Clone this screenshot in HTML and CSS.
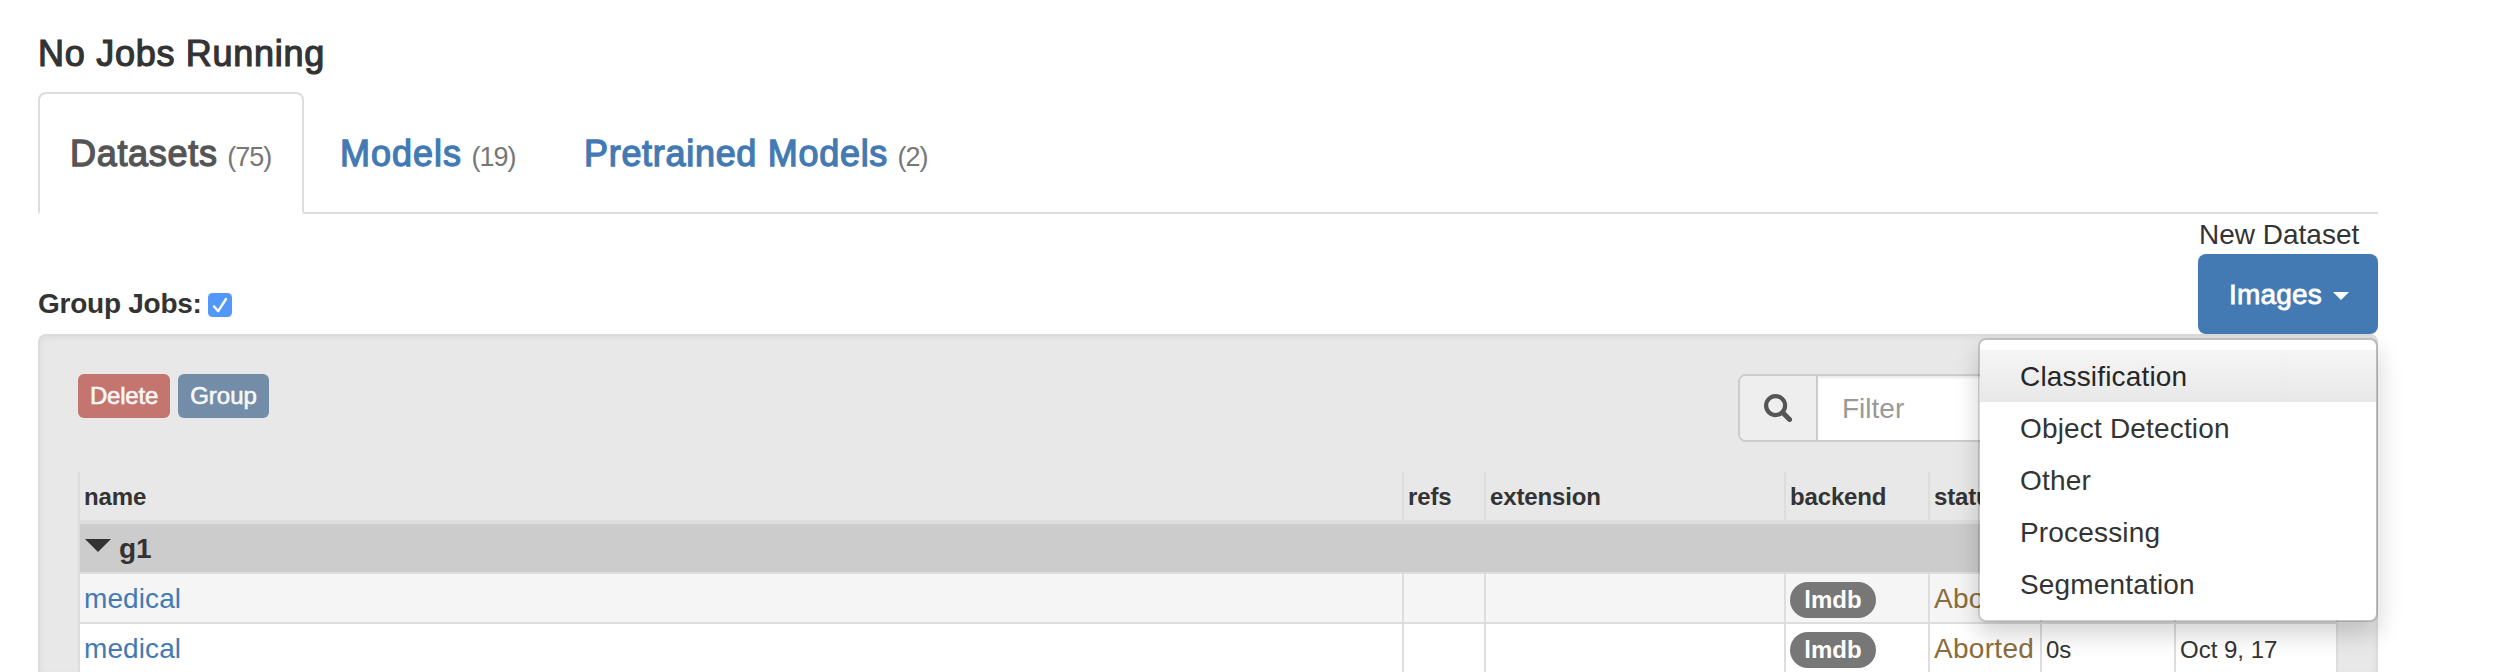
FILE: index.html
```html
<!DOCTYPE html>
<html lang="en">
<head>
<meta charset="utf-8">
<title>Datasets</title>
<link rel="stylesheet" href="styles.css">
</head>
<body>
<main class="page">
  <h4 class="running">No Jobs Running</h4>
  <nav class="tabs">
    <a class="tab tab-datasets active"><span>Datasets</span><small>(75)</small></a>
    <a class="tab tab-models"><span>Models</span><small>(19)</small></a>
    <a class="tab tab-pretrained"><span>Pretrained Models</span><small>(2)</small></a>
  </nav>
  <section class="toolbar">
    <label class="group-jobs">Group Jobs:
      <svg class="check" viewBox="0 0 24 24"><rect width="24" height="24" rx="4.5" fill="#5198f8"/><path d="M6 13.4l4.2 4.8L18 6" fill="none" stroke="#fff" stroke-width="2.4" stroke-linecap="round" stroke-linejoin="round"/></svg>
    </label>
    <div class="new-dataset">
      <div class="new-label">New Dataset</div>
      <button class="images-btn">Images<span class="caret"></span></button>
      <ul class="menu">
        <li class="hover">Classification</li>
        <li>Object Detection</li>
        <li>Other</li>
        <li>Processing</li>
        <li>Segmentation</li>
      </ul>
    </div>
  </section>
  <section class="well">
    <div class="actions">
      <button class="btn danger">Delete</button>
      <button class="btn primary">Group</button>
      <div class="search">
        <span class="addon"><svg class="search-icon" viewBox="0 0 28 28"><circle cx="11.6" cy="11.6" r="9.5" fill="none" stroke="#555" stroke-width="4.2"/><path d="M18.6 18.6l7 7" stroke="#555" stroke-width="5" stroke-linecap="round"/></svg></span>
        <span class="filter">Filter</span>
      </div>
    </div>
    <table class="jobs">
      <colgroup><col class="c-name"><col class="c-refs"><col class="c-ext"><col class="c-backend"><col class="c-status"><col class="c-elapsed"><col class="c-date"></colgroup>
      <thead><tr><th>name</th><th>refs</th><th>extension</th><th>backend</th><th>status</th><th></th><th></th></tr></thead>
      <tbody>
        <tr class="group"><td colspan="7"><span class="toggle"></span>g1</td></tr>
        <tr class="odd"><td><a>medical</a></td><td></td><td></td><td><span class="badge">lmdb</span></td><td class="aborted">Aborted</td><td></td><td></td></tr>
        <tr class="last"><td><a>medical</a></td><td></td><td></td><td><span class="badge">lmdb</span></td><td class="aborted">Aborted</td><td><span class="sm">0s</span></td><td><span class="sm">Oct 9, 17</span></td></tr>
      </tbody>
    </table>
  </section>
</main>
</body>
</html>
```
FILE: styles.css
```css
* { box-sizing: border-box; }
body {
  margin: 0;
  height: 672px;
  overflow: hidden;
  background: #fff;
  color: #333;
  font: 28px/40px "Liberation Sans", Arial, sans-serif;
}
button { font-family: inherit; border: 0; }
.page { width: 2340px; margin-left: 38px; padding-top: 34px; }

.running {
  margin: 0 0 18px;
  font-size: 36px;
  font-weight: 400;
  line-height: 40px;
  letter-spacing: .72px;
  -webkit-text-stroke: 1.2px;
}

.tabs { display: flex; gap: 4px; height: 122px; border-bottom: 2px solid #ddd; }
.tab {
  height: 122px;
  padding: 1px 30px 0;
  border: 2px solid transparent;
  border-radius: 8px 8px 0 0;
  color: #447ab3;
  font-size: 36px;
  line-height: 118px;
  white-space: nowrap;
}
.tab.active { color: #555; background: #fff; border-color: #ddd; border-bottom-color: #fff; }
.tab span { letter-spacing: .7px; -webkit-text-stroke: 1.3px; }
.tab small { margin-left: 9.5px; color: #777; font-size: 27px; letter-spacing: -1px; }
.tab-datasets { width: 266px; }
.tab-models { width: 240px; }
.tab-models span { letter-spacing: 1px; }

.toolbar { display: flex; justify-content: space-between; height: 120px; }
.group-jobs { display: flex; align-items: flex-start; gap: 6px; padding-top: 70px; font-weight: 700; letter-spacing: -.25px; }
.check { width: 24px; height: 24px; margin-top: 9px; }
.new-dataset { position: relative; z-index: 2; width: 180px; }
.new-label { height: 40px; padding: 1px 0 0 1px; white-space: nowrap; }
.images-btn {
  display: flex;
  align-items: center;
  gap: 11px;
  width: 180px;
  height: 80px;
  padding: 1px 30px 0 31px;
  border-radius: 8px;
  background: #447ab3;
  color: #fff;
  font-size: 28px;
  letter-spacing: .2px;
  -webkit-text-stroke: .8px;
}
.caret { border: 8px solid transparent; border-top-color: #fff; border-bottom: 0; margin-top: 3px; }
.menu {
  position: absolute;
  top: 124px;
  right: 0;
  width: 400px;
  margin: 0;
  padding: 10px 0;
  list-style: none;
  background: #fff;
  background-clip: padding-box;
  border: 2px solid rgba(0, 0, 0, .15);
  border-radius: 8px;
  box-shadow: 0 12px 24px rgba(0, 0, 0, .175);
}
.menu li { height: 52px; padding: 1px 0 0 40px; line-height: 52px; letter-spacing: .17px; }
.menu .hover { color: #262626; background: linear-gradient(#f5f5f5, #e8e8e8); }

.well {
  height: 338px;
  padding: 38px 38px 0;
  background: #e8e8e8;
  border: 2px solid #dcdcdc;
  border-bottom: 0;
  border-radius: 8px 8px 0 0;
  box-shadow: inset 0 2px 6px rgba(0, 0, 0, .05);
}
.actions { display: flex; align-items: flex-start; gap: 8px; height: 98px; }
.btn { width: 92px; height: 44px; padding: 0; border-radius: 6px; color: #f7f7f7; font-size: 24px; -webkit-text-stroke: .6px; }
.danger { background: #c5756f; letter-spacing: -.2px; }
.primary { width: 91px; background: #738da8; }
.search { display: flex; width: 600px; height: 68px; margin-left: auto; border: 2px solid #ccc; border-radius: 8px; background: #fff; overflow: hidden; }
.addon { display: flex; align-items: center; justify-content: center; width: 78px; background: #eee; border-right: 2px solid #ccc; }
.search-icon { width: 28px; height: 28px; }
.filter { flex: 1; padding: 1px 0 0 24px; color: #999; line-height: 64px; box-shadow: inset 0 2px 2px rgba(0, 0, 0, .075); }

.jobs { width: 2260px; table-layout: fixed; border-collapse: separate; border-spacing: 0; }
.c-name { width: 1324px; }
.c-refs { width: 82px; }
.c-ext { width: 300px; }
.c-backend { width: 144px; }
.c-status { width: 112px; }
.c-elapsed { width: 134px; }
.c-date { width: 164px; }
.jobs th, .jobs td { height: 50px; padding: 2px 0 0 4px; border-left: 2px solid #ddd; border-bottom: 2px solid #ddd; text-align: left; line-height: 46px; white-space: nowrap; vertical-align: top; }
.jobs tr > :last-child { border-right: 2px solid #ddd; }
.jobs th { height: 52px; border-bottom-width: 4px; font-size: 24px; letter-spacing: -.15px; }
.jobs td { background: #fff; }
.jobs .odd td { background: #f5f5f5; }
.jobs .last td { height: 48px; border-bottom: 0; }
.jobs .group td { background: #ccc; font-weight: 700; }
.jobs a { color: #447ab3; letter-spacing: .1px; }
.jobs .aborted { color: #8a6d3b; letter-spacing: .3px; }
.toggle { display: inline-block; margin: 0 8px 6px 1px; border: 13px solid transparent; border-top-color: #333; border-bottom: 0; }
.sm { font-size: 24px; }
.badge { display: inline-block; width: 86px; height: 36px; border-radius: 18px; background: #777; color: #fff; font-size: 24px; font-weight: 700; line-height: 36px; text-align: center; }
```
